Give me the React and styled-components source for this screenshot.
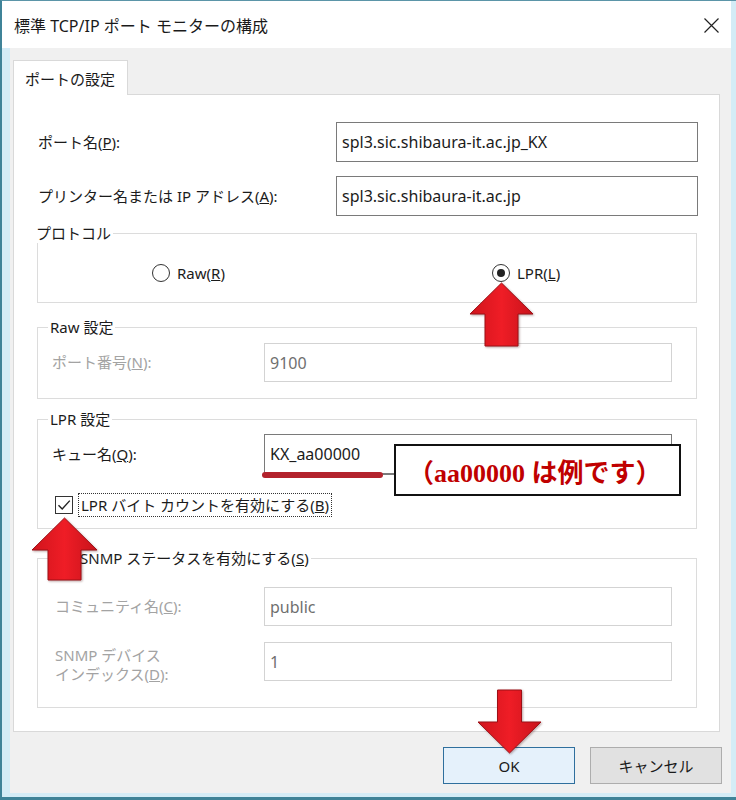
import React from "react";
import styled, { createGlobalStyle } from "styled-components";

const Global = createGlobalStyle`
  html, body { margin: 0; padding: 0; }
  body {
    width: 736px; height: 800px; overflow: hidden;
    font-family: "Noto Sans", "Noto Sans CJK JP", sans-serif;
    color: #1b1b1b;
  }
  *, *::before, *::after { box-sizing: border-box; }
`;

const Page = styled.div`
  position: relative;
  width: 736px;
  height: 800px;
  overflow: hidden;
`;

const Window = styled.div`
  width: 736px;
  height: 800px;
  display: flex;
  flex-direction: column;
  background: #d4ecf6;
  border-left: 2px solid #3f8398;
  border-top: 1px solid #5b95a8;
  border-bottom: 3px solid #3f8398;
  padding: 0 5px 4px 0;
`;

const TitleBar = styled.div`
  height: 47px;
  flex: none;
  background: #ffffff;
  display: flex;
  align-items: center;
  justify-content: space-between;
  padding: 0 11px 0 12px;
  font-size: 16px;
  color: #1a1a1a;
`;

const CloseIcon = styled.svg`
  width: 17px;
  height: 15px;
  margin-top: 1px;
`;

const Body = styled.div`
  flex: 1;
  margin-left: 8px;
  background: #f0f0f0;
  padding: 12px 11px 0 3px;
  display: flex;
  flex-direction: column;
`;

const TabStrip = styled.div`
  display: flex;
  position: relative;
  z-index: 1;
`;

const Tab = styled.div`
  width: 115px;
  height: 35px;
  margin-bottom: -1px;
  background: #ffffff;
  border: 1px solid #d9d9d9;
  border-bottom: none;
  padding-left: 11px;
  display: flex;
  align-items: center;
  font-size: 15px;
`;

const Panel = styled.div`
  height: 638px;
  background: #ffffff;
  border: 1px solid #d9d9d9;
  padding: 27px 21px 0 23px;
  display: flex;
  flex-direction: column;
`;

const FieldRow = styled.div`
  display: grid;
  grid-template-columns: ${(p) => p.$label}px 1fr;
  align-items: ${(p) => (p.$top ? "start" : "center")};
  margin-top: ${(p) => p.$mt || 0}px;
`;

const Label = styled.div`
  font-size: 15px;
  line-height: 19px;
  color: ${(p) => (p.$disabled ? "#a3a3a3" : "#1b1b1b")};
  padding-top: ${(p) => p.$pt || 0}px;
  padding-left: ${(p) => p.$pl || 0}px;
`;

const Input = styled.div`
  height: ${(p) => p.$h || 40}px;
  border: 1px solid ${(p) => (p.$disabled ? "#d3d3d3" : "#7a7a7a")};
  background: #ffffff;
  display: flex;
  align-items: center;
  padding-left: 5px;
  font-size: 16px;
  color: ${(p) => (p.$disabled ? "#6f6f6f" : "#1b1b1b")};
`;

const Group = styled.fieldset`
  margin: ${(p) => p.$mt}px 1px 0 0;
  min-width: 0;
  border: 1px solid #dcdcdc;
  padding: ${(p) => p.$pad};
`;

const Legend = styled.legend`
  font-size: 15px;
  line-height: 20px;
  padding: 0 2px;
  margin-left: ${(p) => (p.$ml !== undefined ? p.$ml : -4)}px;
  color: #1b1b1b;
  display: flex;
  align-items: center;
  gap: 9px;
`;

const RadioGrid = styled.div`
  display: grid;
  grid-template-columns: 340px 1fr;
  height: 20px;
  align-items: center;
`;

const RadioItem = styled.label`
  display: flex;
  align-items: center;
  gap: 7px;
  font-size: 15px;
  line-height: 20px;
`;

const RadioCircle = styled.span`
  width: 18px;
  height: 18px;
  border-radius: 50%;
  border: 1px solid #333333;
  background: #ffffff;
  display: flex;
  align-items: center;
  justify-content: center;
  &::after {
    content: "";
    width: 8px;
    height: 8px;
    border-radius: 50%;
    background: ${(p) => (p.$checked ? "#222222" : "transparent")};
  }
`;

const CheckRow = styled.div`
  display: flex;
  align-items: center;
  gap: 5px;
  margin-top: ${(p) => p.$mt || 0}px;
  height: 24px;
  padding-left: 3px;
`;

const CheckBox = styled.span`
  width: 18px;
  height: 18px;
  flex: none;
  border: 1px solid #333333;
  background: #ffffff;
  display: flex;
  align-items: center;
  justify-content: center;
`;

const FocusLabel = styled.span`
  font-size: 15px;
  line-height: 22px;
  padding: 0 2px;
  border: 1px dotted #333333;
`;

const ButtonRow = styled.div`
  display: flex;
  justify-content: flex-end;
  gap: 15px;
  margin: 15px -2px 0 0;
`;

const Button = styled.div`
  width: 132px;
  height: 37px;
  display: flex;
  align-items: center;
  justify-content: center;
  font-size: 15px;
  background: ${(p) => (p.$primary ? "#e5f1fb" : "#e1e1e1")};
  border: 1px solid ${(p) => (p.$primary ? "#2f6f9d" : "#adadad")};
`;

/* ---------- annotations (overlay) ---------- */

const ArrowSvg = styled.svg`
  position: absolute;
  left: ${(p) => p.$x}px;
  top: ${(p) => p.$y}px;
  overflow: visible;
  filter: drop-shadow(1px 1px 1px rgba(60, 0, 0, 0.35));
`;

const Underline = styled.div`
  position: absolute;
  left: 262px;
  top: 472px;
  width: 121px;
  height: 6px;
  border-radius: 3px;
  background: #b3232d;
`;

const Connector = styled.div`
  position: absolute;
  left: 383px;
  top: 474px;
  width: 12px;
  height: 1px;
  background: #7a7a7a;
`;

const Callout = styled.div`
  position: absolute;
  left: 394px;
  top: 444px;
  width: 287px;
  height: 52px;
  border: 2px solid #111111;
  background: #ffffff;
  display: flex;
  align-items: center;
  padding-left: 12px;
  font-family: "Liberation Serif", "Noto Sans CJK JP", serif;
  font-weight: bold;
  font-size: 26px;
  color: #c00000;
  white-space: nowrap;
`;

function Arrow({ x, y, w, h, head, shaft, down, id }) {
  const cx = w / 2;
  const s1 = cx - shaft / 2;
  const s2 = cx + shaft / 2;
  const pts = down
    ? `${s1},0 ${s2},0 ${s2},${h - head} ${w},${h - head} ${cx},${h} 0,${h - head} ${s1},${h - head}`
    : `${cx},0 ${w},${head} ${s2},${head} ${s2},${h} ${s1},${h} ${s1},${head} 0,${head}`;
  return (
    <ArrowSvg $x={x} $y={y} width={w} height={h} viewBox={`0 0 ${w} ${h}`}>
      <defs>
        <linearGradient id={id} x1="0" y1="0" x2="1" y2="0">
          <stop offset="0" stopColor="#d0141c" />
          <stop offset="0.5" stopColor="#ef1d26" />
          <stop offset="1" stopColor="#c8131b" />
        </linearGradient>
      </defs>
      <polygon points={pts} fill={`url(#${id})`} stroke="#9c1016" strokeWidth="1" strokeLinejoin="miter" />
    </ArrowSvg>
  );
}

const Check = () => (
  <svg width="14" height="12" viewBox="0 0 14 12">
    <path d="M1.5 6.2 L5.2 10 L12.8 1.6" fill="none" stroke="#222" strokeWidth="1.4" />
  </svg>
);

export default function App() {
  return (
    <Page>
      <Global />
      <Window>
        <TitleBar>
          <span>標準 TCP/IP ポート モニターの構成</span>
          <CloseIcon viewBox="0 0 17 15">
            <path d="M1.5 0.5 L15.5 14.5 M15.5 0.5 L1.5 14.5" stroke="#222" strokeWidth="1.2" />
          </CloseIcon>
        </TitleBar>
        <Body>
          <TabStrip>
            <Tab>ポートの設定</Tab>
          </TabStrip>
          <Panel>
            <FieldRow $label={299}>
              <Label $pl={1}>ポート名(<u>P</u>):</Label>
              <Input>spl3.sic.shibaura-it.ac.jp_KX</Input>
            </FieldRow>
            <FieldRow $label={299} $mt={14}>
              <Label $pl={1}>プリンター名または IP アドレス(<u>A</u>):</Label>
              <Input>spl3.sic.shibaura-it.ac.jp</Input>
            </FieldRow>

            <Group $mt={7} $pad="20px 0 19px 114px">
              <Legend $ml={-118}>プロトコル</Legend>
              <RadioGrid>
                <RadioItem>
                  <RadioCircle />
                  <span>Raw(<u>R</u>)</span>
                </RadioItem>
                <RadioItem>
                  <RadioCircle $checked />
                  <span>LPR(<u>L</u>)</span>
                </RadioItem>
              </RadioGrid>
            </Group>

            <Group $mt={14} $pad="6px 24px 16px 14px">
              <Legend>Raw 設定</Legend>
              <FieldRow $label={212}>
                <Label $disabled>ポート番号(<u>N</u>):</Label>
                <Input $disabled $h={39}>9100</Input>
              </FieldRow>
            </Group>

            <Group $mt={10} $pad="5px 24px 11px 14px">
              <Legend>LPR 設定</Legend>
              <FieldRow $label={212}>
                <Label>キュー名(<u>Q</u>):</Label>
                <Input>KX_aa00000</Input>
              </FieldRow>
              <CheckRow $mt={19}>
                <CheckBox>
                  <Check />
                </CheckBox>
                <FocusLabel>
                  LPR バイト カウントを有効にする(<u>B</u>)
                </FocusLabel>
              </CheckRow>
            </Group>

            <Group $mt={19} $pad="19px 24px 23px 14px">
              <Legend $ml={-1}>
                <CheckBox />
                <span>
                  SNMP ステータスを有効にする(<u>S</u>)
                </span>
              </Legend>
              <FieldRow $label={212}>
                <Label $disabled $pl={3}>コミュニティ名(<u>C</u>):</Label>
                <Input $disabled $h={39}>public</Input>
              </FieldRow>
              <FieldRow $label={212} $mt={16} $top>
                <Label $disabled $pt={4} $pl={3}>
                  SNMP デバイス
                  <br />
                  インデックス(<u>D</u>):
                </Label>
                <Input $disabled $h={39}>1</Input>
              </FieldRow>
            </Group>
          </Panel>
          <ButtonRow>
            <Button $primary>OK</Button>
            <Button>キャンセル</Button>
          </ButtonRow>
        </Body>
      </Window>

      <Underline />
      <Connector />
      <Callout>（aa00000 は例です）</Callout>
      <Arrow id="g1" x={470} y={283} w={63} h={63} head={31} shaft={33} />
      <Arrow id="g2" x={32} y={518} w={65} h={62} head={32} shaft={33} />
      <Arrow id="g3" x={478} y={690} w={63} h={63} head={31} shaft={24} down />
    </Page>
  );
}
